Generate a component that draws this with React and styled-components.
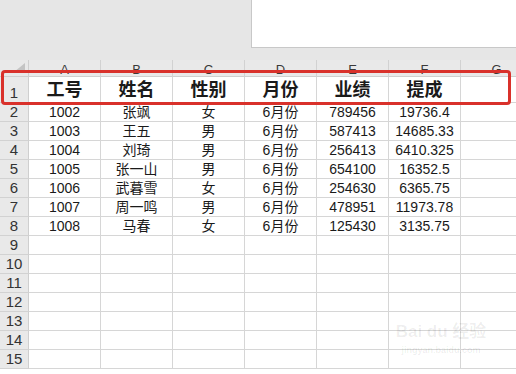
import React from "react";
import styled, { createGlobalStyle } from "styled-components";

const Global = createGlobalStyle`
  body {
    margin: 0;
    background: #ffffff;
    font-family: "Liberation Sans", "Noto Sans CJK SC", sans-serif;
    overflow: hidden;
  }
`;

const Page = styled.div`
  position: relative;
  width: 516px;
  height: 374px;
  overflow: hidden;
`;

const Toolbar = styled.div`
  height: 60px;
  background: #e6e6e6;
  display: flex;
  justify-content: flex-end;
  align-items: flex-start;
`;

const Panel = styled.div`
  width: 265px;
  height: 48px;
  background: #ffffff;
  border-left: 1px solid #c8c8c8;
  border-bottom: 1px solid #c8c8c8;
  box-sizing: border-box;
`;

const Sheet = styled.div`
  display: grid;
  grid-template-columns: 29px repeat(7, 72px);
  grid-template-rows: 17px 26px repeat(14, 19px);
`;

const Corner = styled.div`
  background: #e9e9e9;
  border-right: 1px solid #cfcfcf;
  border-bottom: 1px solid #cfcfcf;
  box-sizing: border-box;
  position: relative;
  &::after {
    content: "";
    position: absolute;
    right: 3px;
    bottom: 4px;
    border-style: solid;
    border-width: 0 0 9px 11px;
    border-color: transparent transparent #c4c4c4 transparent;
  }
`;

const ColHead = styled.div`
  background: #e9e9e9;
  border-right: 1px solid #d2d2d2;
  border-bottom: 1px solid #cfcfcf;
  box-sizing: border-box;
  display: flex;
  align-items: center;
  justify-content: center;
  padding-top: 3px;
  font-size: 13px;
  color: #3a3a3a;
  line-height: 14px;
`;

const RowHead = styled.div`
  background: #e9e9e9;
  border-right: 1px solid #cfcfcf;
  border-bottom: 1px solid #d2d2d2;
  box-sizing: border-box;
  display: flex;
  align-items: flex-end;
  justify-content: center;
  font-size: 15px;
  color: #333;
  line-height: 18px;
`;

const Cell = styled.div`
  border-right: 1px solid #d6d6d6;
  border-bottom: 1px solid #d6d6d6;
  box-sizing: border-box;
  display: flex;
  align-items: flex-end;
  justify-content: center;
  white-space: nowrap;
  color: #1a1a1a;
  font-size: ${(p) => (p.$title ? "18px" : "14px")};
  font-weight: ${(p) => (p.$title ? 700 : 400)};
  line-height: ${(p) => (p.$title ? "24px" : "18px")};
`;

const Highlight = styled.div`
  position: absolute;
  left: 1px;
  top: 70px;
  width: 510px;
  height: 35px;
  border: 3px solid #d9312b;
  border-radius: 4px;
  box-sizing: border-box;
  pointer-events: none;
`;

const Watermark = styled.div`
  position: absolute;
  left: 393px;
  top: 320px;
  width: 96px;
  color: rgba(0, 0, 0, 0.07);
  font-family: "Liberation Sans", "Noto Sans CJK SC", sans-serif;
  text-align: center;
  white-space: nowrap;
  pointer-events: none;
`;

const Mark = styled.div`
  font-size: 17px;
  font-weight: 700;
  line-height: 24px;
`;

const MarkUrl = styled.div`
  font-size: 9px;
  font-weight: 700;
  line-height: 12px;
`;

const letters = ["A", "B", "C", "D", "E", "F", "G"];
const titles = ["工号", "姓名", "性别", "月份", "业绩", "提成", ""];
const rows = [
  ["1002", "张飒", "女", "6月份", "789456", "19736.4"],
  ["1003", "王五", "男", "6月份", "587413", "14685.33"],
  ["1004", "刘琦", "男", "6月份", "256413", "6410.325"],
  ["1005", "张一山", "男", "6月份", "654100", "16352.5"],
  ["1006", "武暮雪", "女", "6月份", "254630", "6365.75"],
  ["1007", "周一鸣", "男", "6月份", "478951", "11973.78"],
  ["1008", "马春", "女", "6月份", "125430", "3135.75"],
];

export default function App() {
  const body = [];
  for (let r = 0; r < 14; r++) {
    const data = rows[r] || [];
    body.push(<RowHead key={`h${r}`}>{r + 2}</RowHead>);
    for (let c = 0; c < 7; c++) {
      body.push(<Cell key={`${r}_${c}`}>{data[c] || ""}</Cell>);
    }
  }
  return (
    <Page>
      <Global />
      <Toolbar>
        <Panel />
      </Toolbar>
      <Sheet>
        <Corner />
        {letters.map((l) => (
          <ColHead key={l}>{l}</ColHead>
        ))}
        <RowHead>1</RowHead>
        {titles.map((t, i) => (
          <Cell key={`t${i}`} $title>
            {t}
          </Cell>
        ))}
        {body}
      </Sheet>
      <Highlight />
      <Watermark>
        <Mark>Bai du 经验</Mark>
        <MarkUrl>jingyan.baidu.com</MarkUrl>
      </Watermark>
    </Page>
  );
}
